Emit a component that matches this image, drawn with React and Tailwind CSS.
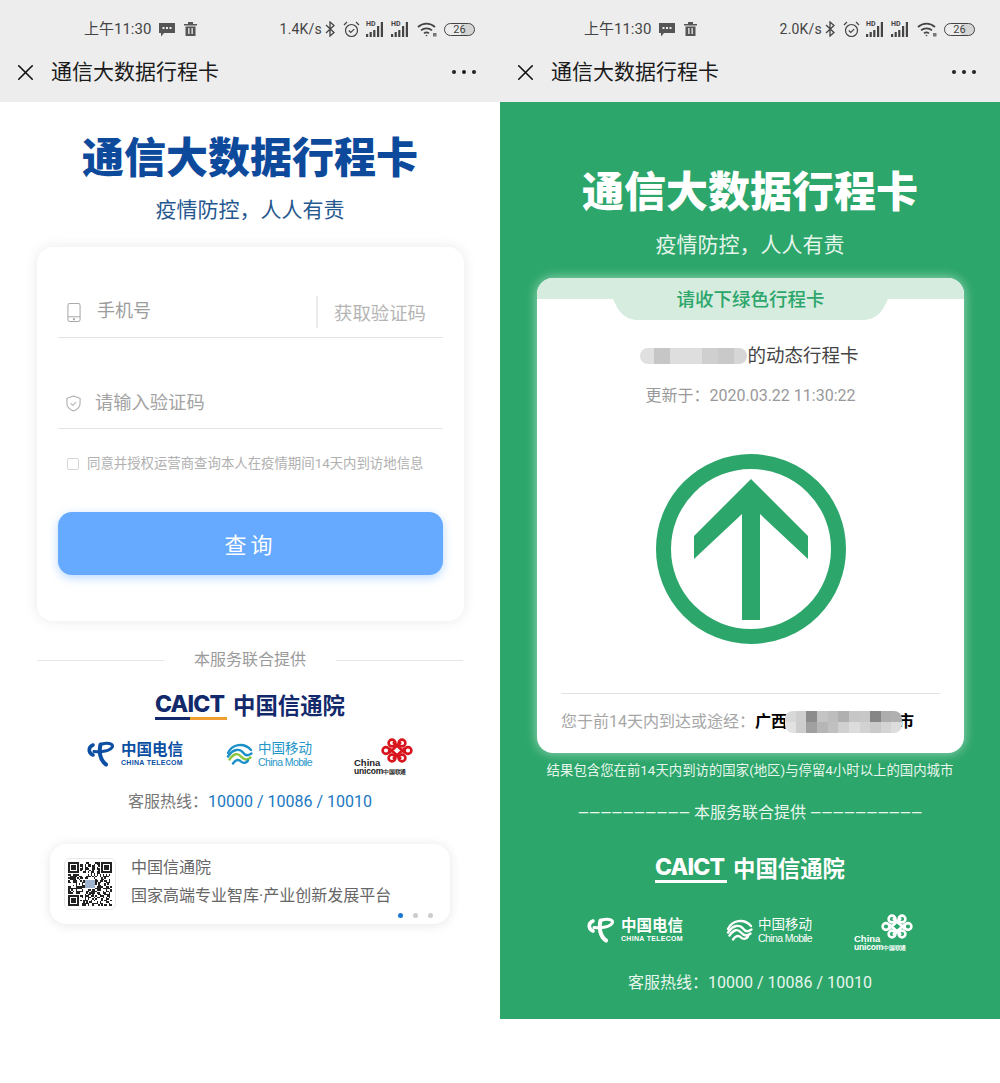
import React from "react";
import { X } from "lucide-react";

const qrSize = 29;

function qrCells() {
  const cells = [];
  let seed = 7;
  for (let y = 0; y < qrSize; y++) {
    for (let x = 0; x < qrSize; x++) {
      seed = (seed * 1103515245 + 12345) & 0x7fffffff;
      const inFinder = (x < 8 && y < 8) || (x > 20 && y < 8) || (x < 8 && y > 20);
      const inLogo = x > 10 && x < 18 && y > 10 && y < 18;
      if (!inFinder && !inLogo && (seed >> 16) % 2 === 0) cells.push([x, y]);
    }
  }
  return cells;
}

function Finder({ x, y }) {
  return (
    <g>
      <rect x={x} y={y} width="7" height="7" fill="#222" />
      <rect x={x + 1} y={y + 1} width="5" height="5" fill="#fff" />
      <rect x={x + 2} y={y + 2} width="3" height="3" fill="#222" />
    </g>
  );
}

function QrCode() {
  return (
    <svg viewBox="0 0 29 29" className="w-[44px] h-[44px]" shapeRendering="crispEdges">
      {qrCells().map(([x, y]) => (
        <rect key={`${x}-${y}`} x={x} y={y} width="1" height="1" fill="#222" />
      ))}
      <Finder x={0} y={0} />
      <Finder x={22} y={0} />
      <Finder x={0} y={22} />
      <rect x="11.5" y="12" width="6" height="5" fill="#9fb4cf" />
    </svg>
  );
}

function Signal() {
  return (
    <div className="relative w-[19px] h-[16px]">
      <span className="absolute left-0 top-[-1px] text-[7px] leading-[8px] font-bold">HD</span>
      <svg viewBox="0 0 19 16" className="w-[19px] h-[16px]" fill="#444">
        <rect x="0" y="13" width="2.2" height="3" />
        <rect x="3.6" y="11" width="2.2" height="5" />
        <rect x="7.2" y="9" width="2.2" height="7" />
        <rect x="11" y="5" width="2.2" height="11" />
        <rect x="14.8" y="1" width="2.2" height="15" />
      </svg>
    </div>
  );
}

function StatusBar({ speed }) {
  return (
    <div className="flex items-center justify-between h-6 pl-[84px] pr-[25px] text-[#444]">
      <div className="flex items-center">
        <span className="text-[15px] leading-6">上午11:30</span>
        <svg viewBox="0 0 16 15" className="w-[16px] h-[15px] ml-[8px]" fill="#555">
          <path d="M0 1h16v10H5l-3 3.5V11H0z" />
          <rect x="3.5" y="5" width="2" height="2" fill="#ededed" />
          <rect x="7" y="5" width="2" height="2" fill="#ededed" />
          <rect x="10.5" y="5" width="2" height="2" fill="#ededed" />
        </svg>
        <svg viewBox="0 0 13 14" className="w-[13px] h-[14px] ml-[9px]" fill="#555">
          <path d="M0 2h4V0h5v2h4v1.5H0zM1.5 4.5h10V14h-10z" />
          <rect x="4.2" y="6" width="1.3" height="6" fill="#ededed" />
          <rect x="7.5" y="6" width="1.3" height="6" fill="#ededed" />
        </svg>
      </div>
      <div className="flex items-center">
        <span className="text-[14px] leading-6 tracking-[0.2px]">{speed}</span>
        <svg viewBox="0 0 10 16" className="w-[10px] h-[16px] ml-[3px]" fill="none" stroke="#444" strokeWidth="1.3">
          <path d="M1 4l8 7.5L5 15V1l4 3.5L1 12" />
        </svg>
        <svg viewBox="0 0 17 17" className="w-[17px] h-[17px] ml-[8px]" fill="none" stroke="#444" strokeWidth="1.2">
          <circle cx="8.5" cy="9.5" r="6" />
          <path d="M5.8 9.5l2 2 3.4-3.4M1 4l3-3M16 4l-3-3" />
        </svg>
        <div className="flex gap-[6px] ml-[6px]">
          <Signal />
          <Signal />
        </div>
        <svg viewBox="0 0 20 15" className="w-[20px] h-[15px] ml-[7px]" fill="none" stroke="#444" strokeWidth="1.7">
          <path d="M1 5c5-4.5 12-4.5 17 0M4 8.3c3-2.7 8-2.7 11 0M7 11.3c1.500-1.200 3.500-1.200 5 0" />
          <circle cx="9.5" cy="13.500" r="0.8" fill="#444" stroke="none" />
          <rect x="16" y="11" width="3.500" height="3.500" fill="#777" stroke="none" />
        </svg>
        <div className="ml-[7px] w-[31px] h-[13px] rounded-full border border-[#444] bg-[linear-gradient(90deg,#ededed_55%,#d4d4d4_55%)] flex items-center justify-center text-[11px] leading-none">
          26
        </div>
      </div>
    </div>
  );
}

function Header({ speed }) {
  return (
    <div className="h-[102px] pt-[17px] bg-[#ededed]">
      <StatusBar speed={speed} />
      <div className="flex items-center h-10 mt-[11px] pl-[12px] pr-[24px]">
        <X className="w-[27px] h-[27px] text-[#111]" strokeWidth={1.400} />
        <span className="ml-[12px] text-[21px] leading-10 text-[#1a1a1a]">通信大数据行程卡</span>
        <div className="ml-auto flex gap-[6px]">
          <span className="w-1 h-1 rounded-full bg-[#222]" />
          <span className="w-1 h-1 rounded-full bg-[#222]" />
          <span className="w-1 h-1 rounded-full bg-[#222]" />
        </div>
      </div>
    </div>
  );
}

function Caict({ light }) {
  return (
    <div className={`flex items-start justify-center h-7 ${light ? "text-white" : "text-[#12296b]"}`}>
      <div className="w-[72px]">
        <div className="font-['Inter',sans-serif] font-extrabold text-[23px] leading-[22px] tracking-[-0.8px] whitespace-nowrap">CAICT</div>
        <div className="flex mt-[2px] h-[3px]">
          <div className={`w-[35px] ${light ? "bg-white" : "bg-[#12296b]"}`} />
          <div className={`w-[37px] ${light ? "bg-white" : "bg-[#f0a030]"}`} />
        </div>
      </div>
      <div className="ml-[6px] text-[22.4px] leading-[27px] font-bold whitespace-nowrap">中国信通院</div>
    </div>
  );
}

function LogoRow({ light }) {
  const telecom = light ? "#fff" : "#0b4ea2";
  const mobileA = light ? "#fff" : "#1b8fc8";
  const mobileB = light ? "#fff" : "#8cc63f";
  const knot = light ? "#fff" : "#d8141c";
  return (
    <div className={`flex items-start h-[34px] pl-[87px] ${light ? "text-white" : ""}`}>
      <div className="flex items-center w-[97px] h-[26px] mt-[3px]">
        <svg viewBox="0 0 28 26" className="w-[28px] h-[26px] shrink-0" fill="none" stroke={telecom} strokeLinecap="round">
          <path d="M6 4C1 6 1 12 6 14" strokeWidth="3.600" />
          <path d="M7 10.500C14 11.500 24 10 25.500 5.500 26 2.500 20 1.500 15 3" strokeWidth="3" />
          <path d="M13.500 3.500C12 10 12.500 19 19 23.500" strokeWidth="4" />
        </svg>
        <div className={`ml-[6px] ${light ? "text-white" : "text-[#0b4ea2]"}`}>
          <div className="text-[15.5px] leading-[18px] font-bold whitespace-nowrap">中国电信</div>
          <div className="font-['Liberation_Sans',sans-serif] text-[7px] leading-[8px] font-bold tracking-[0.3px] whitespace-nowrap">CHINA TELECOM</div>
        </div>
      </div>
      <div className="flex items-center w-[86px] h-[26px] mt-[3px] ml-[42px]">
        <svg viewBox="0 0 27 26" className="w-[27px] h-[26px] shrink-0" fill="none" strokeWidth="2.400" strokeLinecap="round">
          <path d="M2 12C6 3 18 1 25 9" stroke={mobileA} />
          <path d="M2 15.500C7 7.500 14 7.500 17 11.500s5 3 8.500 1" stroke={mobileA} />
          <path d="M3.500 18.500C8 12 12 12 15 15.500s6 4 9.500 1" stroke={mobileB} />
          <path d="M7 22.500C10 18 13 18.500 15 20.500s5 2 7-1" stroke={mobileA} />
        </svg>
        <div className={`ml-[5px] ${light ? "text-white" : "text-[#1f96c9]"}`}>
          <div className="text-[13.500px] leading-[15px] whitespace-nowrap">中国移动</div>
          <div className="font-['Liberation_Sans',sans-serif] text-[10.500px] leading-[12px] whitespace-nowrap tracking-[-0.6px]">China Mobile</div>
        </div>
      </div>
      <div className="w-[59px] ml-[42px]">
        <div className="flex justify-end">
          <svg viewBox="0 0 32 25" className="w-[32px] h-[25px]" fill="none" stroke={knot} strokeWidth="2.600">
            <circle cx="5" cy="12.500" r="3.400" />
            <circle cx="27" cy="12.500" r="3.400" />
            <circle cx="11" cy="5" r="3.400" />
            <circle cx="21" cy="5" r="3.400" />
            <circle cx="11" cy="20" r="3.400" />
            <circle cx="21" cy="20" r="3.400" />
            <path d="M8 10L20 21M24 10L12 21M8 15L20 4M24 15L12 4" />
          </svg>
        </div>
        <div className={`-mt-[4px] font-['Liberation_Sans',sans-serif] font-bold leading-[8px] whitespace-nowrap ${light ? "text-white" : "text-[#222]"}`}>
          <div className="text-[9.500px]">China</div>
          <div className="text-[8.500px] tracking-[-0.2px]">unicom<span className="text-[5.500px]">中国联通</span></div>
        </div>
      </div>
    </div>
  );
}

function LoginPanel() {
  return (
    <div className="w-[500px] bg-white">
      <Header speed="1.4K/s" />
      <h1 className="mt-[35px] text-center text-[42px] leading-[44px] font-black text-[#0d4a9c]">通信大数据行程卡</h1>
      <p className="mt-[14px] text-center text-[21px] leading-[30px] text-[#26588f]">疫情防控&#xFF0C;人人有责</p>

      <div className="mt-[22px] ml-[37px] w-[427px] h-[374px] px-[21px] rounded-2xl bg-white shadow-[0_0_14px_rgba(0,0,0,0.09)]">
        <div className="flex items-center h-[32px] box-content pt-[49px] pb-[9px] border-b border-[#e4e4e4]">
          <svg viewBox="0 0 14 20" className="ml-[9px] w-[14px] h-[19px]" fill="none" stroke="#aaa" strokeWidth="1.100">
            <rect x="0.600" y="0.600" width="12.800" height="18.800" rx="2" />
            <path d="M0.600 14.500h12.800" />
            <circle cx="7" cy="17" r="0.700" fill="#aaa" />
          </svg>
          <span className="ml-[16px] text-[18px] leading-6 text-[#9c9c9c] -translate-y-px">手机号</span>
          <div className="ml-auto w-[2px] h-[32px] bg-[#ececec]" />
          <span className="ml-[16px] mr-[17px] text-[18.400px] leading-6 text-[#b5b5b5] translate-y-[2px]">获取验证码</span>
        </div>
        <div className="flex items-center h-[32px] box-content pt-[49px] pb-[9px] border-b border-[#e4e4e4]">
          <svg viewBox="0 0 16 18" className="ml-[8px] w-[15px] h-[17px]" fill="none" stroke="#aaa" strokeWidth="1.100">
            <path d="M8 1l7 2.500V9c0 4-3 6.500-7 8-4-1.500-7-4-7-8V3.500z" />
            <path d="M5 8.800l2.300 2.200 3.700-3.600" />
          </svg>
          <span className="ml-[14px] text-[18.300px] leading-6 text-[#a3a3a3]">请输入验证码</span>
        </div>
        <div className="flex items-center h-5 mt-[25px]">
          <div className="ml-[9px] w-[12px] h-[12px] rounded-[2px] border border-[#d5d5d5]" />
          <span className="ml-[8px] text-[13.400px] leading-5 text-[#b0b0b0] whitespace-nowrap">同意并授权运营商查询本人在疫情期间14天内到访地信息</span>
        </div>
        <button className="w-full h-[63px] mt-[38px] pt-[3px] rounded-[14px] bg-[#66aaff] text-white text-[22px] tracking-[4px] shadow-[0_3px_10px_rgba(102,170,255,0.45)]">
          查询
        </button>
      </div>

      <div className="flex items-center h-6 mt-[27px] mx-[37px]">
        <div className="flex-1 h-px bg-[#e6e6e6]" />
        <span className="mx-[30px] text-[16px] leading-6 text-[#9a9a9a]">本服务联合提供</span>
        <div className="flex-1 h-px bg-[#e6e6e6]" />
      </div>
      <div className="mt-[21px]">
        <Caict />
      </div>
      <div className="mt-[17px]">
        <LogoRow />
      </div>
      <p className="mt-[18px] text-center text-[16px] leading-6 text-[#777]">
        客服热线&#xFF1A;<span className="text-[#1a78c2]">10000 / 10086 / 10010</span>
      </p>

      <div className="relative flex items-center mt-[30px] ml-[50px] w-[400px] h-[80px] pl-[14px] rounded-2xl bg-white shadow-[0_1px_12px_rgba(0,0,0,0.1)]">
        <div className="flex items-center justify-center w-[52px] h-[52px] rounded-md border border-[#e8e8e8]">
          <QrCode />
        </div>
        <div className="ml-[15px] -mt-[4px] text-[16px] text-[#666]">
          <div className="leading-6">中国信通院</div>
          <div className="mt-1 leading-6 whitespace-nowrap">国家高端专业智库·产业创新发展平台</div>
        </div>
        <div className="absolute right-[17px] bottom-[6px] flex gap-[10px]">
          <span className="w-[5px] h-[5px] rounded-full bg-[#1a78d2]" />
          <span className="w-[5px] h-[5px] rounded-full bg-[#ccc]" />
          <span className="w-[5px] h-[5px] rounded-full bg-[#ccc]" />
        </div>
      </div>
    </div>
  );
}

const nameMosaic = [
  "w-[14px] bg-[#e0e0e0]",
  "w-[16px] bg-[#c6c6c6]",
  "w-[32px] bg-[#dedede]",
  "w-[16px] bg-[#cfcfcf]",
  "w-[16px] bg-[#c9c9c9]",
  "w-[13px] bg-[#d6d6d6]",
];

const addressTop = [
  "bg-[#d8d8d8]", "bg-[#cfcfcf]", "bg-[#8c8c8c]", "bg-[#c4c4c4]", "bg-[#bdbdbd]",
  "bg-[#b0b0b0]", "bg-[#c6c6c6]", "bg-[#c8c8c8]", "bg-[#868686]", "bg-[#adadad]", "bg-[#b0b0b0]",
];
const addressBottom = [
  "bg-[#e2e2e2]", "bg-[#cdcdcd]", "bg-[#a0a0a0]", "bg-[#b6b6b6]", "bg-[#c0c0c0]",
  "bg-[#d0d0d0]", "bg-[#dcdcdc]", "bg-[#d2d2d2]", "bg-[#cacaca]", "bg-[#d4d4d4]", "bg-[#dddddd]",
];

function TripPanel() {
  return (
    <div className="w-[500px]">
      <div className="bg-[#2ca66a] h-[1019px]">
        <Header speed="2.0K/s" />
        <h1 className="mt-[69px] text-center text-[42px] leading-[44px] font-black text-white">通信大数据行程卡</h1>
        <p className="mt-[15px] text-center text-[21px] leading-[30px] text-[#e6f5ec]">疫情防控&#xFF0C;人人有责</p>

        <div className="mt-[18px] ml-[37px] w-[427px] h-[475px] rounded-2xl bg-white overflow-hidden shadow-[0_0_12px_rgba(255,255,255,0.55)]">
          <div className="relative h-[42px]">
            <svg viewBox="0 0 427 42" className="absolute inset-0 w-[427px] h-[42px]" fill="#d5ecdf">
              <path d="M0 0H427V21H351C346 32 341 42 325 42H102C86 42 81 32 76 21H0Z" />
            </svg>
            <div className="relative text-center text-[18.500px] leading-[44px] font-medium text-[#2ca66a]">请收下绿色行程卡</div>
          </div>
          <div className="flex items-center justify-center h-[26px] mt-[23px] -translate-x-px">
            <div className="flex h-4 rounded-full overflow-hidden blur-[0.6px]">
              {nameMosaic.map((cell) => (
                <div key={cell} className={cell} />
              ))}
            </div>
            <span className="text-[18.500px] leading-[26px] text-[#444] whitespace-nowrap">的动态行程卡</span>
          </div>
          <p className="h-6 mt-[15px] text-center text-[16px] leading-6 text-[#999]">更新于&#xFF1A;2020.03.22 11:30:22</p>
          <div className="flex justify-center mt-[46px]">
            <svg viewBox="0 0 190 190" className="w-[190px] h-[190px]" fill="#2ca66a">
              <circle cx="95" cy="95" r="87.500" fill="none" stroke="#2ca66a" strokeWidth="15" />
              <path d="M95 25L152 82V105L104 60V166H86V60L38 105V82Z" />
            </svg>
          </div>
          <div className="mt-[49px] mx-[24px] border-t border-[#e2e2e2]" />
          <div className="flex items-center h-6 mt-[16px] ml-[24px] text-[16px] leading-6 whitespace-nowrap">
            <span className="text-[#a6a6a6]">您于前14天内到达或途经&#xFF1A;</span>
            <span className="font-bold text-black">广西</span>
            <div className="relative w-[117px] h-[22px] -ml-[2px] shrink-0 rounded-lg overflow-hidden blur-[0.4px]">
              <div className="flex h-[11px]">
                {addressTop.map((cell, i) => (
                  <div key={i} className={`flex-1 ${cell}`} />
                ))}
              </div>
              <div className="flex h-[11px]">
                {addressBottom.map((cell, i) => (
                  <div key={i} className={`flex-1 ${cell}`} />
                ))}
              </div>
            </div>
            <span className="-ml-[4px] font-bold text-black">市</span>
          </div>
        </div>

        <p className="mt-[8px] text-center text-[13.400px] leading-5 text-[#e8f6ee] whitespace-nowrap">结果包含您在前14天内到访的国家(地区)与停留4小时以上的国内城市</p>
        <p className="mt-[20px] text-center text-[16px] leading-6 text-[#e8f6ee] whitespace-nowrap">
          <span className="text-[14.400px]">——————————</span> 本服务联合提供 <span className="text-[14.400px]">——————————</span>
        </p>
        <div className="mt-[30px]">
          <Caict light />
        </div>
        <div className="mt-[30px]">
          <LogoRow light />
        </div>
        <p className="mt-[23px] text-center text-[16px] leading-6 text-[#e8f6ee]">客服热线&#xFF1A;10000 / 10086 / 10010</p>
      </div>
    </div>
  );
}

export default function App() {
  return (
    <div className="flex w-[1000px] min-h-[1083px] bg-white font-['Roboto','Noto_Sans_CJK_SC',sans-serif]">
      <LoginPanel />
      <TripPanel />
    </div>
  );
}
